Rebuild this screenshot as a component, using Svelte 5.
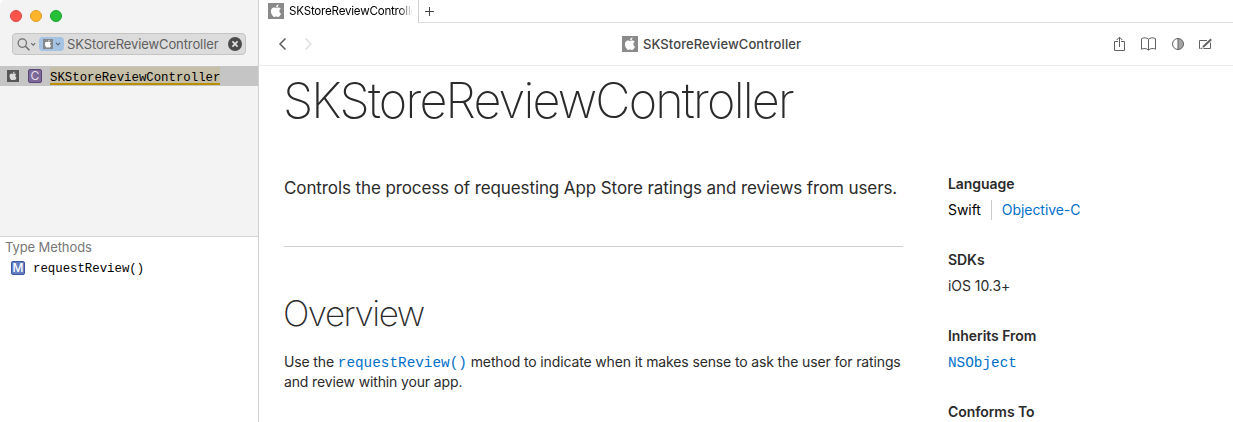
<script>
  const appleBody = 'M12.152 6.896c-.948 0-2.415-1.078-3.96-1.04-2.04.027-3.91 1.183-4.961 3.014-2.117 3.675-.546 9.103 1.519 12.09 1.013 1.454 2.208 3.09 3.792 3.039 1.52-.065 2.09-.987 3.935-.987 1.831 0 2.35.987 3.96.948 1.637-.026 2.676-1.48 3.676-2.948 1.156-1.688 1.636-3.325 1.662-3.415-.039-.013-3.182-1.221-3.22-4.857-.026-3.04 2.48-4.494 2.597-4.559-1.429-2.09-3.623-2.324-4.39-2.376-2-.156-3.675 1.09-4.61 1.09zM15.53 3.83c.843-1.012 1.4-2.427 1.245-3.83-1.207.052-2.662.805-3.532 1.818-.78.896-1.454 2.338-1.273 3.714 1.338.104 2.715-.688 3.559-1.701';
  const symbol = 'SKStoreReviewController';
</script>

{#snippet apple(size, bg, inset, fg = '#fff')}
  <svg class="apple" width={size} height={size} viewBox="0 0 {size} {size}">
    <rect width={size} height={size} fill={bg} />
    <path d={appleBody} fill={fg} transform="translate({inset} {inset - 0.3}) scale({(size - inset * 2) / 24})" />
  </svg>
{/snippet}

<div class="window">
  <aside>
    <div class="top">
      <div class="lights"><i class="red"></i><i class="yellow"></i><i class="green"></i></div>
      <div class="search">
        <svg class="lens" width="20" height="14" viewBox="0 0 20 14" fill="none" stroke="#6b6b6b" stroke-width="1.2">
          <circle cx="5.3" cy="6.1" r="4.2" /><path d="M8.4 9.2l4 4" stroke-width="1.5" /><path d="M14.2 6.2l2 2 2-2" />
        </svg>
        <span class="token">
          {@render apple(10, '#84888c', 1.2)}
          <svg width="6" height="4" viewBox="0 0 6 4" fill="none" stroke="#5e6b7a" stroke-width="1.2"><path d="M1 .8l2 2 2-2" /></svg>
        </span>
        <span class="query">{symbol}</span>
        <svg class="clear" width="14" height="14" viewBox="0 0 14 14"><circle cx="7" cy="7" r="7" fill="#4b4b4b" /><path d="M4.4 4.4l5.2 5.2M9.6 4.4L4.4 9.6" stroke="#e4e4e4" stroke-width="1.6" /></svg>
      </div>
      <div class="result">
        {@render apple(12, '#565656', 1.7, '#dcdcdc')}
        <span class="kind class-kind">C</span>
        <span class="mono hit">{symbol}</span>
      </div>
    </div>
    <div class="members">
      <div class="label">Type Methods</div>
      <div class="member"><span class="kind method-kind">M</span><span class="mono">requestReview()</span></div>
    </div>
  </aside>

  <main>
    <div class="tabs">
      <div class="tab">{@render apple(16, '#8a8a8a', 1.8)}<span>{symbol}</span></div>
      <div class="add"><svg width="10" height="10" viewBox="0 0 10 10" stroke="#444" stroke-width="1"><path d="M0 4.5h9M4.5 0v9" /></svg></div>
    </div>
    <div class="toolbar">
      <svg class="nav" width="36" height="14" viewBox="0 0 36 14" fill="none" stroke-width="1.5"><path d="M7.5 1.500L2 7l5.500 5.500" stroke="#5d5d5d" /><path d="M27.5 1.500L33 7l-5.500 5.500" stroke="#dedede" /></svg>
      <div class="crumb">{@render apple(16, '#8a8a8a', 1.8)}<span>{symbol}</span></div>
      <div class="actions">
        <svg width="12" height="16" viewBox="0 0 12 16" fill="none" stroke="#606060"><path d="M4 5.5H.5v9h10v-9H7M5.5 11V1.2M2.7 4l2.8-2.8L8.3 4" /></svg>
        <svg width="16" height="14" viewBox="0 0 16 14" fill="none" stroke="#606060"><path d="M7.5 2.2C6 .6 2.500.3.5 1.700v10.500c2-1.100 5.200-.9 7 .8 1.800-1.700 5-1.900 7-.8V1.700C12.500.3 9 .6 7.500 2.200zV13" /></svg>
        <svg width="12" height="12" viewBox="0 0 12 12"><path d="M6 .5a5.500 5.500 0 010 11z" fill="#a6a6a6" /><circle cx="6" cy="6" r="5.500" fill="none" stroke="#606060" /><path d="M6 .5v11" stroke="#606060" /></svg>
        <svg width="14" height="12" viewBox="0 0 14 12" fill="none" stroke="#606060"><path d="M8 2.500H.5v8h1M11.500 4.500v6h-7" /><path d="M4 9L12.200 1.200" stroke-width="2" /><path d="M2.200 10.800l1.200-1.200" stroke-width="1.200" /></svg>
      </div>
    </div>
    <div class="page">
      <article>
        <h1><span>{symbol}</span></h1>
        <p class="abstract">Controls the process of requesting App Store ratings and reviews from users.</p>
        <hr />
        <h2>Overview</h2>
        <p class="body">Use the <a class="mono">requestReview()</a> method to indicate when it makes sense to ask the user for ratings<br />and review within your app.</p>
      </article>
      <section class="facts">
        <h3>Language</h3>
        <div class="langs"><span class="swift">Swift</span><a>Objective-C</a></div>
        <h3>SDKs</h3>
        <div class="value">iOS 10.3+</div>
        <h3>Inherits From</h3>
        <div class="value"><a class="mono">NSObject</a></div>
        <h3>Conforms To</h3>
      </section>
    </div>
  </main>
</div>

<style>
  .window { display: flex; width: 1233px; height: 422px; overflow: hidden; background: #fff; font-family: Inter, "Liberation Sans", sans-serif; color: #2b2b2b; white-space: nowrap; }
  .window * { box-sizing: border-box; }
  svg { display: block; flex: none; }
  a { color: #0070c9; }
  .mono { font-family: "Liberation Mono", monospace; }
  aside { width: 259px; flex: none; border-right: 1px solid #d2d2d2; }
  .top { height: 237px; background: #f3f3f3; border-bottom: 1px solid #d4d4d4; border-top-left-radius: 5px; }
  .lights { display: flex; gap: 8px; padding: 10px 0 0 10px; height: 33px; }
  .lights i { width: 12px; height: 12px; border-radius: 50%; border: 1px solid #e2463f; background: #ff5350; }
  .lights .yellow { background: #ffb429; border-color: #e09e23; }
  .lights .green { background: #24c138; border-color: #1aa52c; }
  .search { display: flex; align-items: center; width: 234px; height: 22px; margin-left: 12px; padding: 0 3px 0 4px; background: #dcdcdc; border: 1px solid #c4c4c4; border-radius: 4px; }
  .token { display: flex; align-items: center; gap: 2px; width: 25px; height: 14px; margin-left: 2px; padding-left: 4px; border-radius: 4px; background: #a5c3e2; }
  .query { width: 165px; padding-left: 3px; font-size: 13px; letter-spacing: -.1px; color: #606060; }
  .clear { margin-left: auto; }
  .result { display: flex; align-items: center; height: 20px; margin-top: 11px; padding-left: 7px; background: #c5c5c5; color: #000; }
  .kind { width: 14px; height: 14px; border-radius: 2px; font-size: 12px; line-height: 12px; text-align: center; color: #fff; }
  .class-kind { margin-left: 9px; background: #7d6998; border: 1px solid #5b4678; color: #e4deec; }
  .method-kind { background: #6580c2; border: 1px solid #3c58a3; font-weight: 500; }
  .hit { height: 18px; margin-left: 8px; font-size: 12.35px; line-height: 22px; background: #c6bfa8; border-bottom: 2px solid #b98f00; }
  .label { padding: 2px 0 0 5px; font-size: 13px; line-height: 16px; letter-spacing: -.1px; color: #777; }
  .member { display: flex; align-items: center; height: 20px; margin-top: 3px; padding-left: 11px; color: #000; }
  .member .mono { margin-left: 8px; padding-top: 2px; font-size: 12.35px; }
  main { flex: 1; min-width: 0; }
  .tabs { display: flex; height: 23px; }
  .tab { display: flex; width: 159px; padding: 3px 6px 0 9px; overflow: hidden; color: #000; }
  .tab span { width: 124px; margin-left: 5px; overflow: hidden; font-size: 11.600px; line-height: 16px; letter-spacing: -.22px; -webkit-mask-image: linear-gradient(90deg, #000 110px, transparent 124px); mask-image: linear-gradient(90deg, #000 110px, transparent 124px); }
  .add { flex: 1; padding: 7px 0 0 6px; border-left: 1px solid #d0d0d0; border-bottom: 1px solid #dcdcdc; }
  .toolbar { display: flex; align-items: center; height: 43px; border-bottom: 1px solid #ececec; }
  .nav { margin-left: 19px; }
  .crumb { display: flex; align-items: center; width: 190px; margin-left: 308px; font-size: 13px; letter-spacing: .08px; font-weight: 500; color: #444; }
  .crumb span { margin-left: 5px; }
  .actions { display: flex; align-items: center; gap: 15px; margin-left: auto; padding-right: 20px; }
  .page { display: flex; height: 356px; overflow: hidden; padding-left: 25px; }
  article { width: 619px; flex: none; }
  h1, h2, h3, p { margin: 0; }
  h1 { height: 70px; margin-left: -1px; padding-top: 4px; font-size: 48.500px; font-weight: 200; line-height: 62px; letter-spacing: -1.820px; }
  .abstract { height: 110px; padding-top: 38px; font-size: 17px; line-height: 28px; letter-spacing: -.1px; }
  hr { height: 1px; margin: 0; border: 0; background: #d0d0d0; }
  h2 { height: 105px; margin-left: -1px; padding-top: 45px; font-size: 35px; font-weight: 200; line-height: 42px; letter-spacing: -1.500px; }
  .body { font-size: 14px; line-height: 20px; letter-spacing: -.135px; }
  .body .mono { font-size: 14.350px; line-height: 1; letter-spacing: 0; }
  .facts { margin-left: 45px; padding-top: 105px; font-size: 14px; line-height: 26px; letter-spacing: -.06px; }
  .facts .mono { font-size: 14.350px; letter-spacing: 0; }
  h3 { height: 26px; font-size: 14px; font-weight: 600; }
  .langs, .value { height: 26px; margin-bottom: 24px; }
  .langs { display: flex; align-items: center; }
  .swift { height: 20px; padding-right: 10px; margin-right: 10px; line-height: 20px; border-right: 1px solid #ccc; color: #000; }
</style>
